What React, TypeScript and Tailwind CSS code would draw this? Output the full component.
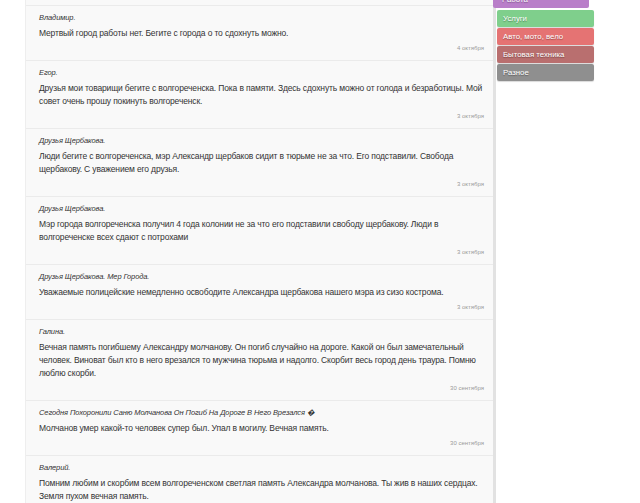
import React from 'react';

interface Comment {
  author: string;
  text: string;
  date: string;
}

const comments: Comment[] = [
  { author: 'Владимир.', text: 'Мертвый город работы нет. Бегите с города о то сдохнуть можно.', date: '4 октября' },
  { author: 'Егор.', text: 'Друзья мои товарищи бегите с волгореченска. Пока в памяти. Здесь сдохнуть можно от голода и безработицы. Мой совет очень прошу покинуть волгореченск.', date: '3 октября' },
  { author: 'Друзья Щербакова.', text: 'Люди бегите с волгореченска, мэр Александр щербаков сидит в тюрьме не за что. Его подставили. Свобода щербакову. С уважением его друзья.', date: '3 октября' },
  { author: 'Друзья Щербакова.', text: 'Мэр города волгореченска получил 4 года колонии не за что его подставили свободу щербакову. Люди в волгореченске всех сдают с потрохами', date: '3 октября' },
  { author: 'Друзья Щербакова. Мер Города.', text: 'Уважаемые полицейские немедленно освободите Александра щербакова нашего мэра из сизо кострома.', date: '3 октября' },
  { author: 'Галина.', text: 'Вечная память погибшему Александру молчанову. Он погиб случайно на дороге. Какой он был замечательный человек. Виноват был кто в него врезался то мужчина тюрьма и надолго. Скорбит весь город день траура. Помню люблю скорби.', date: '30 сентября' },
  { author: 'Сегодня Похоронили Саню Молчанова Он Погиб На Дороге В Него Врезался \uFFFD', text: 'Молчанов умер какой-то человек супер был. Упал в могилу. Вечная память.', date: '30 сентября' },
  { author: 'Валерий.', text: 'Помним любим и скорбим всем волгореченском светлая память Александра молчанова. Ты жив в наших сердцах. Земля пухом вечная память.', date: '30 сентября' },
];

const categories = [
  { name: 'Услуги', cls: 'bg-[#7fcf8c]' },
  { name: 'Авто, мото, вело', cls: 'bg-[#e57373]' },
  { name: 'Бытовая техника', cls: 'bg-[#b96f6f]' },
  { name: 'Разное', cls: 'bg-[#8f8f8f]' },
];

export default function App() {
  return (
    <div className="w-[640px] h-[503px] overflow-hidden bg-white flex [font-family:'Liberation_Sans',Arial,sans-serif] text-[#333]">
      {/* Comment list */}
      <div className="ml-[25px] w-[471px] pt-[5px] bg-[#f9f9f9] border-l border-[#eeeeee] border-r-[3px] border-r-[#e2e2e2] shrink-0">
        {comments.map((c, i) => (
          <div key={i} className="border-t border-[#ebebeb] pl-[13px] pr-[9px] pt-[6px] pb-[7px]">
            <div className="text-[7.5px] italic leading-[12px] tracking-[-0.1px]">{c.author}</div>
            <p className="mt-[3px] text-[8.5px] leading-[13px] tracking-[-0.15px]">{c.text}</p>
            <div className="mt-[4px] text-right text-[6px] leading-[9px] text-[#999]">{c.date}</div>
          </div>
        ))}
      </div>

      {/* Categories */}
      <div className="-ml-[3px] w-[102px] shrink-0">
        <div className="-mt-[10px] h-[18px] w-[96px] bg-[#b97ec9] rounded-b-[2px] text-white text-[7.8px] leading-[9px] px-[9px] pt-[5px] [text-shadow:0_1px_1px_rgba(0,0,0,0.3)]">Работа</div>
        <div className="ml-[4px] mt-[2px] flex flex-col gap-[1px]">
          {categories.map((cat) => (
            <div
              key={cat.name}
              className={`${cat.cls} h-[17px] w-[97px] rounded-[2px] text-white text-[7.8px] leading-[17px] px-[6px] shadow-[0_1px_1px_rgba(0,0,0,0.15)] [text-shadow:0_1px_1px_rgba(0,0,0,0.35)]`}
            >
              {cat.name}
            </div>
          ))}
        </div>
      </div>
    </div>
  );
}
